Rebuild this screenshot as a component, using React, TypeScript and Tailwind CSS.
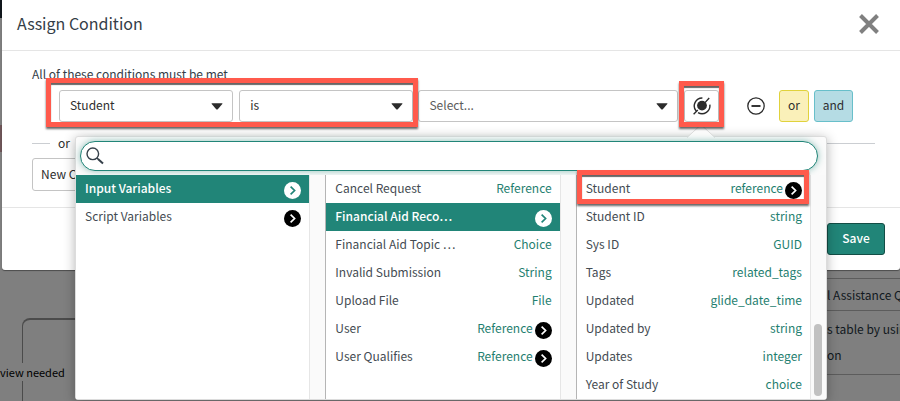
import React from "react";

type Row = { label: string; type?: string; nested?: boolean; active?: boolean };

const scopes: Row[] = [
  { label: "Input Variables", nested: true, active: true },
  { label: "Script Variables", nested: true },
];

const variables: Row[] = [
  { label: "Cancel Request", type: "Reference" },
  { label: "Financial Aid Reco…", nested: true, active: true },
  { label: "Financial Aid Topic …", type: "Choice" },
  { label: "Invalid Submission", type: "String" },
  { label: "Upload File", type: "File" },
  { label: "User", type: "Reference", nested: true },
  { label: "User Qualifies", type: "Reference", nested: true },
];

const fields: Row[] = [
  { label: "Student", type: "reference", nested: true },
  { label: "Student ID", type: "string" },
  { label: "Sys ID", type: "GUID" },
  { label: "Tags", type: "related_tags" },
  { label: "Updated", type: "glide_date_time" },
  { label: "Updated by", type: "string" },
  { label: "Updates", type: "integer" },
  { label: "Year of Study", type: "choice" },
];

function Highlight({ className }: { className: string }) {
  return (
    <div
      aria-hidden="true"
      className={`pointer-events-none absolute z-30 border-5 border-[#ff5a4c] shadow-[0_2px_2px_rgba(0,0,0,0.6),inset_0_2px_1px_rgba(0,0,0,0.6)] ${className}`}
    />
  );
}

function Chevron({ active }: { active?: boolean }) {
  return (
    <svg viewBox="0 0 18 18" className="mt-1 size-[17px] shrink-0" aria-hidden="true">
      <circle cx="9" cy="9" r="9" fill={active ? "#fff" : "#000"} />
      <path d="M7 5l4.2 4L7 13" fill="none" stroke={active ? "#218578" : "#fff"} strokeWidth="1.8" />
    </svg>
  );
}

function Item({ row }: { row: Row }) {
  return (
    <li>
      <button
        type="button"
        className={`flex h-7 w-full items-center pr-2 pb-0.5 pl-[9px] text-left ${
          row.active ? "bg-[#218578] font-medium text-white" : "bg-white text-[#444b52]"
        }`}
      >
        <span className="flex-1 whitespace-nowrap">{row.label}</span>
        {row.type && <span className="text-[#1f8070]">{row.type}</span>}
        {row.nested && <span className="ml-0.5"><Chevron active={row.active} /></span>}
      </button>
    </li>
  );
}

function Column({ rows, first, children }: { rows: Row[]; first?: boolean; children?: React.ReactNode }) {
  return (
    <div className={`flex min-w-0 flex-1 bg-[#fafafa] ${first ? "" : "border-l border-[#b5b5b5]"}`}>
      <ul className="min-w-0 flex-1 bg-white">
        {rows.map((row) => (
          <Item key={row.label} row={row} />
        ))}
      </ul>
      <div className="flex w-4 flex-col items-center justify-end border-l border-[#e6e6e6] pb-[3px]">{children}</div>
    </div>
  );
}

function Picker({ label, value, className, tone }: { label: string; value: string; className: string; tone: string }) {
  return (
    <div className={`relative ${className}`}>
      <select
        aria-label={label}
        className={`block h-8 w-full appearance-none rounded-[3px] border border-[#c4c4c4] bg-white pr-6 pb-0.5 pl-2.5 ${tone}`}
      >
        <option>{value}</option>
      </select>
      <svg viewBox="0 0 12 7" className="pointer-events-none absolute top-[13px] right-2.5 h-[7px] w-3" aria-hidden="true">
        <path d="M1 .3h10q.9 0 .3.8L6.8 6.2q-.8.8-1.6 0L.7 1.1Q.1.3 1 .3z" fill="#2b2b2b" />
      </svg>
    </div>
  );
}

function Canvas() {
  return (
    <div className="absolute inset-0 overflow-hidden text-[#111820]" aria-hidden="true">
      <div className="absolute top-0 left-0 h-[18px] w-1 bg-[#10161c]" />
      <div className="absolute top-[125px] left-0 h-[27px] w-1 bg-[#6e5558]" />
      <div className="absolute top-[318px] left-[22px] h-28 w-64 rounded-tl-lg border-t-2 border-l border-[#4b4b4b]" />
      <div className="absolute top-[363px] left-0 bg-[#7f7f7f] text-[11px] leading-[18px] whitespace-nowrap text-black">
        view needed
      </div>
      <div className="absolute top-[278px] right-0 left-[768px] border-y border-[#5c5c5c] pl-[59px] text-[12px] leading-[31px] whitespace-nowrap">
        l Assistance Qu
      </div>
      <div className="absolute top-[310px] right-0 left-[768px] border-b border-[#5c5c5c] py-1.5 pl-[59px] text-[12px] leading-[26px] whitespace-nowrap">
        <p>s table by usin</p>
        <p>on</p>
      </div>
    </div>
  );
}

function VariablePopup() {
  return (
    <div className="absolute top-[136px] right-[73px] left-[73px] z-20 rounded-[3px] border border-[#dcdcdc] bg-[#fbfbfb] shadow-[0_2px_12px_rgba(0,0,0,0.3)]">
      <svg viewBox="0 0 30 14" className="absolute -top-[13px] right-[110px] h-3.5 w-[30px]" aria-hidden="true">
        <path d="M1 13.5L15 .7l14 12.8" fill="#fbfbfb" stroke="#dcdcdc" />
      </svg>
      <div className="flex h-[38px] pt-1 pr-2 pl-1">
        <label className="relative flex h-[30px] w-full items-center rounded-full border border-[#218578] bg-white pl-[5px] shadow-[0_0_7px_rgba(33,133,120,0.5)]">
          <svg viewBox="0 0 18 18" className="size-[18px]" fill="none" stroke="#36404a" aria-hidden="true">
            <circle cx="6.8" cy="6.8" r="5.8" strokeWidth="1.4" />
            <path d="M11 11l1.5 1.5" strokeWidth="1.2" />
            <path d="M12 12l5 4.6" strokeWidth="2" />
          </svg>
          <input aria-label="Search variables" className="ml-2 min-w-0 flex-1 bg-transparent outline-none" />
        </label>
      </div>
      <div className="relative flex text-[12px] leading-[18px]">
        <Column rows={scopes} first />
        <Column rows={variables} />
        <Column rows={fields}>
          <span className="h-[72px] w-2 rounded-full bg-[#c1c1c1]" />
        </Column>
        <Highlight className="-top-[5px] right-[17px] h-[34px] w-[232px]" />
      </div>
    </div>
  );
}

export default function App() {
  return (
    <div className="relative min-h-screen overflow-hidden bg-[#7f7f7f] font-['Noto_Sans_CJK_SC','Noto_Sans',sans-serif] text-[12px] leading-[18px] text-[#2e2e2e]">
      <Canvas />
      <section role="dialog" aria-labelledby="dialog-title" className="relative ml-0.5 rounded-b-[3px] bg-white shadow-[0_1px_1px_rgba(0,0,0,0.4)]">
        <header className="flex h-[51px] items-center justify-between border-b border-[#e5e5e5] pr-[21px] pb-1 pl-[15px]">
          <h1 id="dialog-title" className="text-[16px] leading-6 text-[#343d47]">Assign Condition</h1>
          <button type="button" aria-label="Close">
            <svg viewBox="0 0 20 20" className="mt-0.5 size-5" aria-hidden="true">
              <path d="M1.5 1.5l17 17M18.5 1.5l-17 17" stroke="#808080" strokeWidth="4" />
            </svg>
          </button>
        </header>

        <div className="border-b border-[#e5e5e5] pt-[14px] pr-[25px] pb-4 pl-[30px]">
          <p className="text-[#343d47]">All of these conditions must be met</p>
          <div className="mt-[7px] flex pr-[22px] pl-[27px]">
            <div className="relative flex flex-[355] gap-1.5">
              <Picker label="Field" value="Student" className="flex-1" tone="text-[#2e2e2e]" />
              <Picker label="Operator" value="is" className="flex-1" tone="text-[#2e2e2e]" />
              <Highlight className="-top-3 -right-[5px] -bottom-[5px] -left-[13px]" />
            </div>
            <Picker label="Value" value="Select..." className="ml-[5px] flex-[260]" tone="text-[#5c5c5c]" />
            <div className="relative ml-1.5">
              <button type="button" aria-label="Pick a variable" className="flex h-8 w-[35px] items-center justify-center rounded-[3px] border border-[#c4c4c4]">
                <svg viewBox="0 0 18 18" className="size-[18px]" fill="none" stroke="#2b2b2b" strokeWidth="1.4" aria-hidden="true">
                  <circle cx="9" cy="8.6" r="4.9" fill="#2b2b2b" stroke="none" />
                  <path d="M9.4 1A7.9 7.9 0 0 0 3 13.8M16.8 7.6A7.9 7.9 0 0 1 5 15.6M12 5.6l4.2-4.6M.6 17.2l4.2-4.2" />
                </svg>
              </button>
              <Highlight className="-top-[9px] -right-[5px] -bottom-[5px] -left-[5px]" />
            </div>
            <button type="button" aria-label="Remove condition" className="ml-[28px]">
              <svg viewBox="0 0 18 18" className="size-[18px]" fill="none" stroke="#2b2b2b" aria-hidden="true">
                <circle cx="9" cy="9" r="8.2" strokeWidth="1.3" />
                <path d="M4.5 9h9" strokeWidth="1.9" />
              </svg>
            </button>
            <button type="button" className="ml-3.5 h-8 w-[30px] rounded-[3px] border border-[#e0d23c] bg-[#faf0b9] pb-0.5">or</button>
            <button type="button" className="ml-[5px] h-8 w-[39px] rounded-[3px] border border-[#68bfca] bg-[#b5dce4] pb-0.5">and</button>
          </div>

          <div className="mt-3 flex items-center gap-2 before:h-px before:w-[18px] before:bg-[#cbced2] after:h-px after:flex-1 after:bg-[#cbced2]">
            or
          </div>
          <button type="button" className="mt-1.5 block h-[33px] rounded-[3px] border border-[#c4c4c4] px-2 pb-0.5">New Criteria</button>
        </div>

        <footer className="flex justify-end px-[15px] py-[15px]">
          <button type="button" className="h-8 w-[58px] rounded-[3px] border border-[#134e46] bg-[#218578] pb-0.5 font-medium text-white">Save</button>
        </footer>

        <VariablePopup />
      </section>
    </div>
  );
}
